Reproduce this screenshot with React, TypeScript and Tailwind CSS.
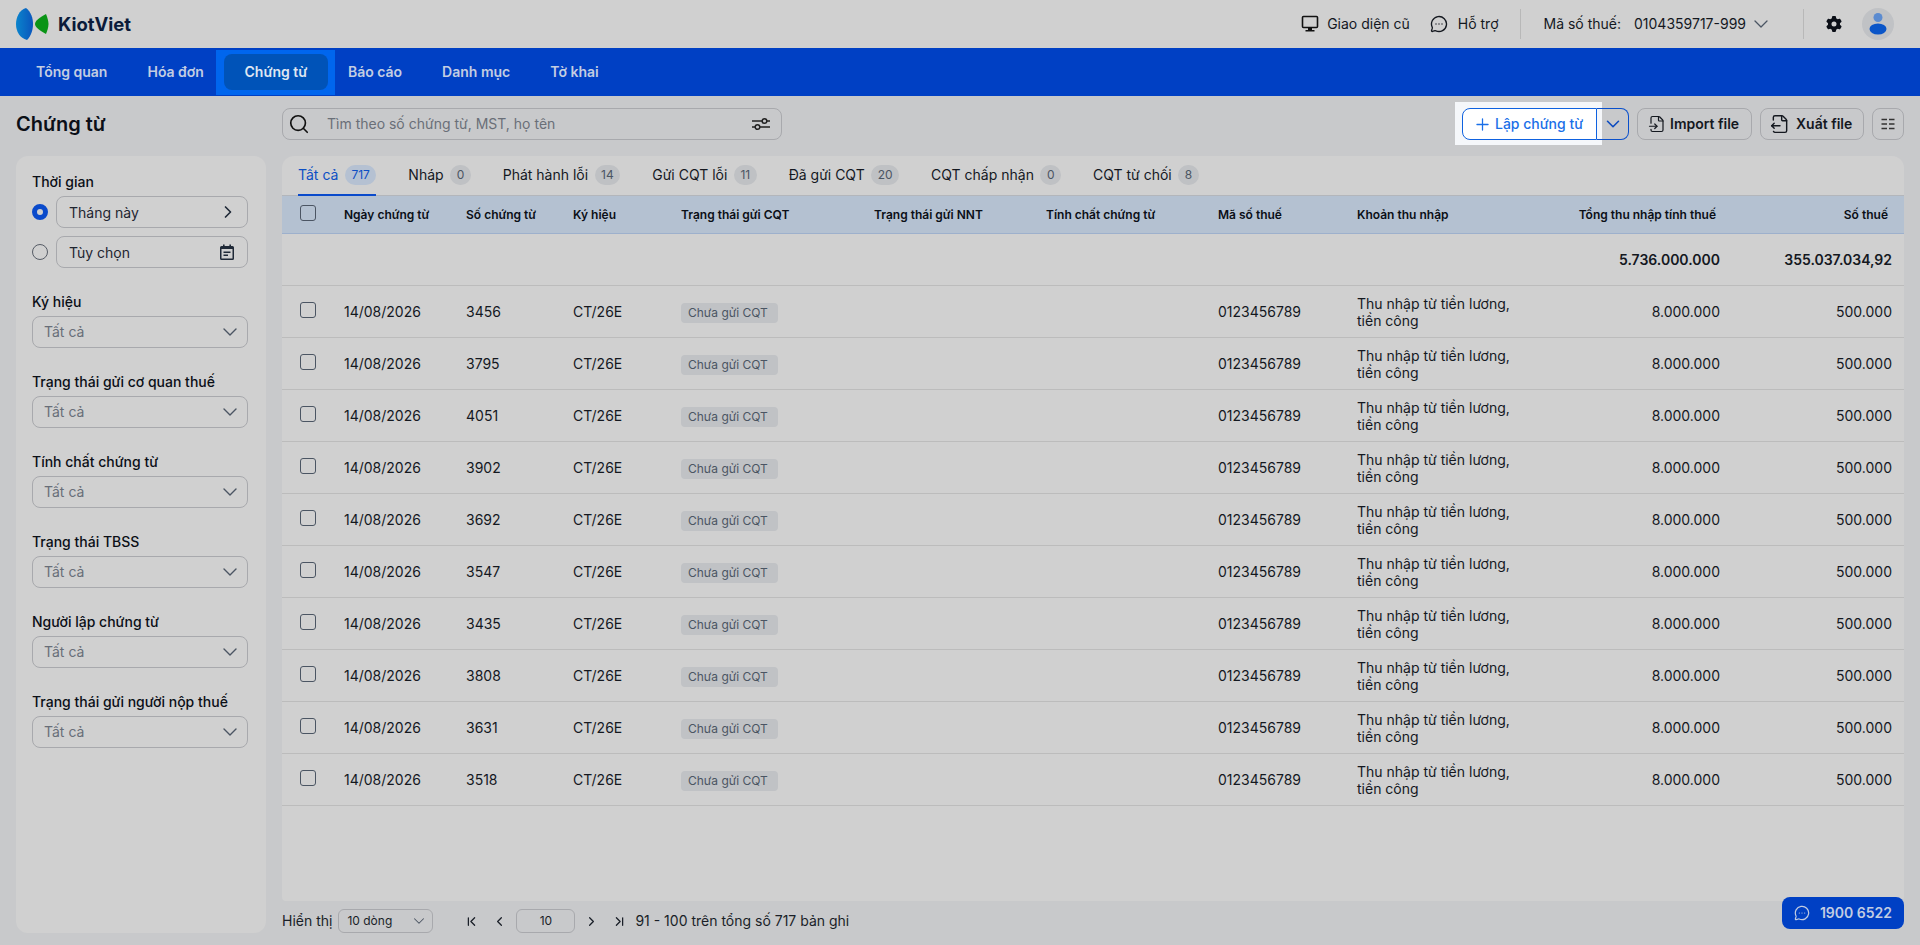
import React from 'react';
import {
  ChevronDown,
  ChevronFirst,
  ChevronLast,
  ChevronLeft,
  ChevronRight,
  FileInput,
  FileOutput,
  MessageCircleMore,
  Plus,
  Search,
} from 'lucide-react';
import { FaGear } from 'react-icons/fa6';

const navItems = ['Tổng quan', 'Hóa đơn', 'Chứng từ', 'Báo cáo', 'Danh mục', 'Tờ khai'];

const tabs = [
  { label: 'Tất cả', count: 717 },
  { label: 'Nháp', count: 0 },
  { label: 'Phát hành lỗi', count: 14 },
  { label: 'Gửi CQT lỗi', count: 11 },
  { label: 'Đã gửi CQT', count: 20 },
  { label: 'CQT chấp nhận', count: 0 },
  { label: 'CQT từ chối', count: 8 },
];

const filters = [
  'Ký hiệu',
  'Trạng thái gửi cơ quan thuế',
  'Tính chất chứng từ',
  'Trạng thái TBSS',
  'Người lập chứng từ',
  'Trạng thái gửi người nộp thuế',
];

const numbers = ['3456', '3795', '4051', '3902', '3692', '3547', '3435', '3808', '3631', '3518'];

const columns = [
  'Ngày chứng từ',
  'Số chứng từ',
  'Ký hiệu',
  'Trạng thái gửi CQT',
  'Trạng thái gửi NNT',
  'Tính chất chứng từ',
  'Mã số thuế',
  'Khoản thu nhập',
];

const Logo = () => (
  <svg width="34" height="34" viewBox="0 0 34 34" className="shrink-0">
    <defs>
      <linearGradient id="kvBlue" x1="0" x2="1" y1="0" y2="0">
        <stop offset="0" stopColor="#0a84cc" />
        <stop offset="1" stopColor="#0a56bd" />
      </linearGradient>
    </defs>
    <path d="M10 1C3 3 0 11 0 17c0 8 4 14 11 16 4-4 6-10 6-16S15 5 10 1Z" fill="url(#kvBlue)" />
    <path d="M30 7c-6 3-11 7-11 10s5 7 11 10c1.500-4 2.500-7 2.500-10S31.500 11 30 7Z" fill="#0a9416" />
  </svg>
);

const MonitorIcon = () => (
  <svg width="18" height="18" viewBox="0 0 18 18" fill="none">
    <rect x="1.500" y="1.500" width="15" height="11" rx="1" stroke="#111" strokeWidth="1.600" />
    <path d="M7 13h4v2h2.500v1.500h-9V15H7z" fill="#111" />
  </svg>
);

const ColumnsIcon = () => (
  <svg width="14" height="12" viewBox="0 0 14 12" fill="none" stroke="#333" strokeWidth="1.300">
    <path d="M0.500 1.500h5.500M8 1.500h5.500M0.500 6h5.500M8 6h5.500M0.500 10.500h5.500M8 10.500h5.500" />
  </svg>
);

const FilterIcon = () => (
  <svg width="18" height="14" viewBox="0 0 18 14" fill="none" stroke="#222" strokeWidth="1.500">
    <path d="M0 4h10M15 4h3M0 10h3M8 10h10" />
    <circle cx="12.500" cy="4" r="2.300" />
    <circle cx="5.500" cy="10" r="2.300" />
  </svg>
);

const CalendarIcon = () => (
  <svg width="14" height="16" viewBox="0 0 14 16" className="mr-[5px]">
    <path d="M3 0.500h1.600V2h4.800V0.500H11V2h1.500A1.500 1.500 0 0 1 14 3.500V14.500A1.500 1.500 0 0 1 12.500 16h-11A1.500 1.500 0 0 1 0 14.500V3.500A1.500 1.500 0 0 1 1.500 2H3Z" fill="#1f2937" />
    <rect x="1.500" y="5" width="11" height="9.500" fill="#d0d0d0" />
    <path d="M3.500 7.500h7v1.400h-7zM3.500 10.500h4.500v1.400H3.500z" fill="#1f2937" />
  </svg>
);

const Avatar = () => (
  <div className="flex h-8 w-8 items-center justify-center rounded-full bg-[#c0c2c5]">
    <svg width="18" height="22" viewBox="0 0 18 22">
      <circle cx="9" cy="4.500" r="4.500" fill="#5b8bd0" />
      <ellipse cx="9" cy="16" rx="8.500" ry="5.500" fill="#0a55c8" />
    </svg>
  </div>
);

const Badge = ({ count, active }: { count: number; active: boolean }) => (
  <span
    className={`flex h-5 min-w-5 items-center justify-center rounded-full px-[6.5px] text-xs ${
      active ? 'bg-[#b5c1d2] text-[#0d4fc4]' : 'bg-[#bfc1c4] text-[#4b5563]'
    }`}
  >
    {count}
  </span>
);

const FilterSelect = ({ label }: { label: string }) => (
  <div>
    <p className="mb-1 text-sm leading-5 font-medium text-[#0b0f17]">{label}</p>
    <div className="flex h-8 items-center justify-between rounded-lg border border-[#a8a9ad] pr-[5px] pl-[11px] text-sm text-[#686e78]">
      Tất cả
      <ChevronDown size={24} strokeWidth={1.4} className="text-[#4b5563]" />
    </div>
  </div>
);

const RadioRow = ({ checked, label, icon }: { checked: boolean; label: string; icon: React.ReactNode }) => (
  <div className="flex items-center gap-2">
    <span
      className={`h-4 w-4 shrink-0 rounded-full ${
        checked ? 'border-[5px] border-[#0a4acb]' : 'border border-[#565c66]'
      }`}
    />
    <div className="flex h-8 flex-1 items-center justify-between rounded-lg border border-[#a8a9ad] pr-2 pl-3 text-sm text-[#1f2530]">
      <span className="translate-y-px">{label}</span>
      {icon}
    </div>
  </div>
);

const Sidebar = () => (
  <aside className="flex-1 rounded-xl bg-[#d0d0d0] pt-4 pr-[18px] pb-4 pl-4">
    <p className="mb-1 text-sm leading-5 font-medium text-[#0b0f17]">Thời gian</p>
    <div className="flex flex-col gap-2">
      <RadioRow checked label="Tháng này" icon={<ChevronRight size={20} strokeWidth={2} className="mr-px text-[#1f2937]" />} />
      <RadioRow checked={false} label="Tùy chọn" icon={<CalendarIcon />} />
    </div>
    <div className="mt-6 flex flex-col gap-6">
      {filters.map((filter) => (
        <FilterSelect key={filter} label={filter} />
      ))}
    </div>
  </aside>
);

const Toolbar = () => (
  <div className="mb-4 flex h-8 items-center justify-between">
    <div className="flex h-8 w-[500px] items-center rounded-lg border border-[#a8a9ad] pr-[11px] pl-[5px] text-sm text-[#6a6f78]">
      <Search size={22} strokeWidth={1.8} className="text-[#111]" />
      <span className="ml-[17px] flex-1">Tìm theo số chứng từ, MST, họ tên</span>
      <FilterIcon />
    </div>
    <div className="flex items-center gap-2">
      <div className="relative isolate flex h-8">
        <span className="absolute -top-[6px] -bottom-[5px] -left-[7px] z-0 w-[147px] bg-[#f5f7fa]" />
        <button className="relative z-10 flex w-[135px] items-center gap-[3px] rounded-l-lg border border-[#0f62e0] bg-white pl-[10px] text-sm font-medium text-[#1a6fe8]">
          <Plus size={19} strokeWidth={1.6} />
          Lập chứng từ
        </button>
        <button className="relative z-10 flex w-8 items-center justify-center rounded-r-lg border border-l-0 border-[#0a50cc] text-[#0a4ac0]">
          <ChevronDown size={22} strokeWidth={1.7} />
        </button>
      </div>
      <button className="flex h-8 w-[115px] items-center gap-1 rounded-lg border border-[#a8a9ad] pl-[10px] text-sm font-semibold text-[#14181f]">
        <FileInput size={18} strokeWidth={1.6} />
        Import file
      </button>
      <button className="flex h-8 w-[104px] items-center gap-[6px] rounded-lg border border-[#a8a9ad] pl-[9px] text-sm font-semibold text-[#14181f]">
        <FileOutput size={20} strokeWidth={1.7} />
        Xuất file
      </button>
      <button className="flex h-8 w-8 items-center justify-center rounded-lg border border-[#a8a9ad]">
        <ColumnsIcon />
      </button>
    </div>
  </div>
);

const DocumentsTable = () => (
  <table className="w-full table-fixed border-collapse text-sm text-[#14181f]">
    <colgroup>
      <col className="w-[62px]" />
      <col className="w-[122px]" />
      <col className="w-[107px]" />
      <col className="w-[108px]" />
      <col className="w-[193px]" />
      <col className="w-[172px]" />
      <col className="w-[172px]" />
      <col className="w-[139px]" />
      <col className="w-[163px]" />
      <col className="w-[212px]" />
      <col />
    </colgroup>
    <thead>
      <tr className="h-[37px] border-b border-[#9db0cc] bg-[#b4c1d1] text-xs font-semibold text-[#0b0f17]">
        <th className="pl-[18px] text-left">
          <input type="checkbox" className="block size-4 -translate-y-px appearance-none rounded-[3px] border border-[#4b5563]" />
        </th>
        {columns.map((column) => (
          <th key={column} className="pt-px text-left font-semibold">
            {column}
          </th>
        ))}
        <th className="pt-px pr-4 text-right font-semibold">Tổng thu nhập tính thuế</th>
        <th className="pt-px pr-4 text-right font-semibold">Số thuế</th>
      </tr>
    </thead>
    <tbody>
      <tr className="h-[52px] border-b border-[#bcbcbc] font-semibold">
        <td colSpan={9} />
        <td className="pt-0.5 pr-3 text-right">5.736.000.000</td>
        <td className="pt-0.5 pr-3 text-right">355.037.034,92</td>
      </tr>
      {numbers.map((number) => (
        <tr key={number} className="h-[52px] border-b border-[#bcbcbc]">
          <td className="pl-[18px]">
            <input type="checkbox" className="block size-4 -translate-y-px appearance-none rounded-[3px] border border-[#4b5563]" />
          </td>
          <td className="pt-0.5">14/08/2026</td>
          <td className="pt-0.5">{number}</td>
          <td className="pt-0.5">CT/26E</td>
          <td className="pt-0.5">
            <span className="inline-flex h-5 items-center rounded bg-[#c0c2c5] pr-[10px] pl-[7px] text-xs text-[#4b5563]">
              Chưa gửi CQT
            </span>
          </td>
          <td />
          <td />
          <td className="pt-0.5">0123456789</td>
          <td className="pt-0.5 leading-[17px]">Thu nhập từ tiền lương, tiền công</td>
          <td className="pt-0.5 pr-3 text-right">8.000.000</td>
          <td className="pt-0.5 pr-3 text-right">500.000</td>
        </tr>
      ))}
    </tbody>
  </table>
);

const Pagination = () => (
  <div className="mt-2 flex h-6 items-center text-sm text-[#1a1f28]">
    <span>Hiển thị</span>
    <div className="ml-[6px] flex h-6 w-[95px] items-center justify-between rounded-md border border-[#a8a9ad] pr-1 pl-2 text-xs">
      10 dòng
      <ChevronDown size={18} strokeWidth={1.4} className="text-[#4b5563]" />
    </div>
    <ChevronFirst size={15} strokeWidth={2} className="ml-[31px]" />
    <ChevronLeft size={15} strokeWidth={2} className="ml-[13px]" />
    <div className="ml-[9px] flex h-6 w-[59px] items-center justify-center rounded-md border border-[#a8a9ad] text-xs">10</div>
    <ChevronRight size={15} strokeWidth={2} className="ml-[9px]" />
    <ChevronLast size={15} strokeWidth={2} className="ml-[13px]" />
    <span className="ml-2">91 - 100 trên tổng số 717 bản ghi</span>
  </div>
);

export default function App() {
  return (
    <div className="relative flex h-screen flex-col overflow-hidden bg-[#c8c9cb] font-[Inter,sans-serif]">
      <header className="flex h-12 shrink-0 items-center bg-[#d0d0d0] pr-[26px] pl-4 text-sm text-[#14181f]">
        <Logo />
        <span className="ml-2 text-[18.5px] font-bold text-[#0b1b3a]">KiotViet</span>
        <div className="ml-auto flex items-center gap-2">
          <MonitorIcon />
          <span>Giao diện cũ</span>
        </div>
        <div className="ml-5 flex items-center gap-[10px]">
          <MessageCircleMore size={18} strokeWidth={1.8} />
          <span>Hỗ trợ</span>
        </div>
        <div className="mr-[23px] ml-[21px] h-[30px] w-px bg-[#b8b8b8]" />
        <span>Mã số thuế:</span>
        <span className="ml-[13px]">0104359717-999</span>
        <ChevronDown size={24} strokeWidth={1.3} className="ml-[3px] text-[#4b5563]" />
        <div className="ml-[30px] h-[30px] w-px bg-[#b8b8b8]" />
        <FaGear size={16} className="mr-5 ml-[22px] text-[#0b0f17]" />
        <Avatar />
      </header>

      <nav className="flex h-12 shrink-0 bg-[#0040c4] pl-4 text-sm font-semibold text-[#c3cde2]">
        {navItems.map((item) =>
          item === 'Chứng từ' ? (
            <div key={item} className="mt-[2px] mr-[-7px] ml-[-8px] h-[45px] bg-[#0066ee] pt-1 pr-[7px] pl-2">
              <div className="flex h-9 w-[104px] items-center justify-center rounded-lg bg-[#0053b8] text-[#dfe6f2]">{item}</div>
            </div>
          ) : (
            <div key={item} className="flex items-center px-5">
              {item}
            </div>
          ),
        )}
      </nav>

      <main className="flex min-h-0 flex-1 gap-4 px-4 pt-3 pb-3">
        <div className="flex w-[250px] shrink-0 flex-col">
          <h1 className="mb-4 flex h-8 items-center text-xl font-semibold text-[#0b0f17]">Chứng từ</h1>
          <Sidebar />
        </div>
        <div className="flex min-w-0 flex-1 flex-col">
          <Toolbar />
          <section className="flex-1 overflow-hidden rounded-t-xl rounded-b-sm bg-[#d0d0d0]">
            <div className="flex h-10 border-b border-[#b3b6bb] pl-4">
              {tabs.map((tab, index) => (
                <div
                  key={tab.label}
                  className={`mr-8 flex h-10 items-center gap-[6.5px] border-b-2 text-sm ${
                    index === 0 ? 'border-[#0a4acb] text-[#0d4fc4]' : 'border-transparent text-[#14181f]'
                  }`}
                >
                  {tab.label}
                  <Badge count={tab.count} active={index === 0} />
                </div>
              ))}
            </div>
            <DocumentsTable />
          </section>
          <Pagination />
        </div>
      </main>

      <button className="absolute right-4 bottom-4 flex h-8 w-[122px] items-center justify-center gap-[10px] rounded-lg bg-[#0040c4] text-sm font-semibold text-[#c3cde2]">
        <MessageCircleMore size={16} strokeWidth={1.8} />
        1900 6522
      </button>
    </div>
  );
}
